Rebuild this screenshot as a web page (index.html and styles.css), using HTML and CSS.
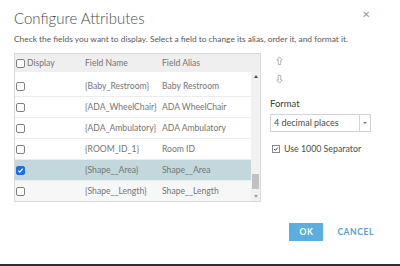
FILE: index.html
```html
<!DOCTYPE html>
<html lang="en">
<head>
    <meta charset="UTF-8">
    <title>Configure Attributes</title>
    <link rel="stylesheet" href="styles.css">
</head>
<body>
    <div class="dialog">
        <div class="dialog-head">
            <h1>Configure Attributes</h1>
            <span class="close">&#x2715;</span>
        </div>
        <p class="hint">Check the fields you want to display. Select a field to change its alias, order it, and format it.</p>

        <div class="main">
            <div class="grid">
                <div class="row head">
                    <span class="cell"><i class="box"></i>Display</span>
                    <span class="cell">Field Name</span>
                    <span class="cell">Field Alias</span>
                </div>
                <div class="body">
                    <div class="rows">
                        <div class="row">
                            <span class="cell"><i class="box"></i></span>
                            <span class="cell">{Baby_Restroom}</span>
                            <span class="cell">Baby Restroom</span>
                        </div>
                        <div class="row">
                            <span class="cell"><i class="box"></i></span>
                            <span class="cell">{ADA_WheelChair}</span>
                            <span class="cell">ADA WheelChair</span>
                        </div>
                        <div class="row">
                            <span class="cell"><i class="box"></i></span>
                            <span class="cell">{ADA_Ambulatory}</span>
                            <span class="cell">ADA Ambulatory</span>
                        </div>
                        <div class="row">
                            <span class="cell"><i class="box"></i></span>
                            <span class="cell">{ROOM_ID_1}</span>
                            <span class="cell">Room ID</span>
                        </div>
                        <div class="row selected">
                            <span class="cell"><i class="box checked"></i></span>
                            <span class="cell">{Shape__Area}</span>
                            <span class="cell">Shape__Area</span>
                        </div>
                        <div class="row">
                            <span class="cell"><i class="box"></i></span>
                            <span class="cell">{Shape__Length}</span>
                            <span class="cell">Shape__Length</span>
                        </div>
                    </div>
                    <div class="scrollbar">
                        <span class="arrow up"></span>
                        <span class="track"><span class="thumb"></span></span>
                        <span class="arrow down"></span>
                    </div>
                </div>
            </div>

            <div class="side">
                <div class="order">
                    <svg width="7" height="10" viewBox="0 0 7 10"><path d="M3.5 0.8 6.2 4H4.8v4.5H2.2V4H0.8Z" fill="none" stroke="#a0a0a0" stroke-width="0.8"/></svg>
                    <svg width="7" height="10" viewBox="0 0 7 10"><path d="M3.5 9.2 6.2 6H4.8V1.5H2.2V6H0.8Z" fill="none" stroke="#a0a0a0" stroke-width="0.8"/></svg>
                </div>
                <label class="format-label">Format</label>
                <div class="select">
                    <span class="select-text">4 decimal places</span>
                    <span class="select-btn"><i class="caret"></i></span>
                </div>
                <div class="separator">
                    <i class="small-box"></i>Use 1000 Separator
                </div>
            </div>
        </div>

        <div class="actions">
            <button class="btn-ok">OK</button>
            <button class="btn-cancel">CANCEL</button>
        </div>
    </div>
    <div class="bottom-edge"></div>
</body>
</html>
```

FILE: styles.css
```css
body {
    margin: 0;
    font-family: Lato, "Open Sans", sans-serif;
    background: #fff;
    width: 400px;
    height: 266px;
    overflow: hidden;
    display: flex;
    flex-direction: column;
}

.dialog {
    flex: 1;
    padding: 0 14px;
    color: #595959;
}

.dialog-head {
    display: flex;
    justify-content: space-between;
    align-items: flex-start;
    height: 33px;
}

h1 {
    margin: 9px 0 0;
    font-size: 15px;
    line-height: 18px;
    font-weight: 300;
    color: #4c4c4c;
}

.close {
    margin: 9px 16px 0 0;
    font-size: 10px;
    line-height: 10px;
    color: #9a9a9a;
}

.hint {
    margin: 0;
    font-size: 8.4px;
    line-height: 12px;
    color: #595959;
}

.main {
    display: flex;
    margin-top: 8px;
}

.grid {
    width: 245px;
    border: 1px solid #d9d9d9;
    font-size: 8.6px;
    color: #757575;
}

.row {
    display: grid;
    grid-template-columns: 70px 77px 1fr;
    align-items: center;
    height: 20px;
    border-bottom: 1px solid #ececec;
    background: #fff;
}

.row.head {
    height: 18px;
    background: #efefef;
    border-bottom: none;
}

.row.selected {
    background: #c3d8dc;
}

.rows .row:last-child {
    background: #f6f8f8;
    border-bottom: none;
}

.cell {
    display: flex;
    align-items: center;
    white-space: nowrap;
    overflow: hidden;
}

.box {
    width: 7px;
    height: 7px;
    border: 1px solid #808080;
    border-radius: 2px;
    background: #fff;
    margin: 0 2px 0 1px;
}

.box.checked {
    background: #1a6ee8 url("data:image/svg+xml,%3Csvg xmlns='http://www.w3.org/2000/svg' viewBox='0 0 8 8'%3E%3Cpath d='M1.5 4.2 3.2 5.8 6.5 2' fill='none' stroke='%23fff' stroke-width='1.4'/%3E%3C/svg%3E") center / 100% no-repeat;
    border-color: #1a6ee8;
}

.body {
    display: flex;
    height: 125px;
    padding-top: 4px;
}

.rows {
    flex: 1;
}

.scrollbar {
    width: 9px;
    display: flex;
    flex-direction: column;
    align-items: center;
    background: #f1f1f1;
    margin-top: -4px;
}

.arrow {
    height: 9px;
    width: 9px;
    display: flex;
    align-items: center;
    justify-content: center;
}

.arrow::before {
    content: "";
    border-left: 2.5px solid transparent;
    border-right: 2.5px solid transparent;
}

.arrow.up::before {
    border-bottom: 3px solid #505050;
}

.arrow.down::before {
    border-top: 3px solid #a0a0a0;
}

.track {
    flex: 1;
    width: 7px;
    display: flex;
    flex-direction: column;
    justify-content: flex-end;
}

.thumb {
    height: 15px;
    background: #c1c1c1;
    margin-bottom: 3px;
}

.side {
    flex: 1;
    padding-left: 9px;
    display: flex;
    flex-direction: column;
}

.order {
    display: flex;
    flex-direction: column;
    gap: 8px;
    padding: 3px 0 0 6px;
}

.format-label {
    margin-top: 14px;
    font-size: 9.5px;
    color: #3c3c3c;
}

.select {
    display: flex;
    width: 99px;
    height: 16px;
    margin-top: 5px;
    border: 1px solid #d3d3d3;
    font-size: 9px;
    color: #4c4c4c;
}

.select-text {
    flex: 1;
    padding-left: 3px;
    line-height: 16px;
}

.select-btn {
    width: 10px;
    border-left: 1px solid #d3d3d3;
    display: flex;
    align-items: center;
    justify-content: center;
}

.caret {
    border-left: 2px solid transparent;
    border-right: 2px solid transparent;
    border-top: 2px solid #777;
}

.separator {
    display: flex;
    align-items: center;
    margin-top: 11px;
    margin-left: 2px;
    font-size: 8.8px;
    color: #4c4c4c;
}

.small-box {
    width: 6px;
    height: 6px;
    border: 1px solid #8a8a8a;
    margin-right: 4px;
    background: #fff url("data:image/svg+xml,%3Csvg xmlns='http://www.w3.org/2000/svg' viewBox='0 0 8 8'%3E%3Cpath d='M1.5 4.2 3.2 5.8 6.5 2' fill='none' stroke='%23333' stroke-width='1.3'/%3E%3C/svg%3E") center / 100% no-repeat;
}

.actions {
    display: flex;
    justify-content: flex-end;
    align-items: center;
    gap: 14px;
    margin-top: 21px;
    padding-right: 12px;
}

button {
    font-family: inherit;
    font-weight: 700;
    letter-spacing: 0.6px;
    border: none;
    cursor: pointer;
}

.btn-ok {
    width: 34px;
    height: 18px;
    background: #5aaee0;
    color: #fff;
    font-size: 8.5px;
}

.btn-cancel {
    background: none;
    color: #4fa0d4;
    font-size: 8.5px;
    padding: 0;
}

.bottom-edge {
    height: 2px;
    background: #2e2e2e;
}
```
